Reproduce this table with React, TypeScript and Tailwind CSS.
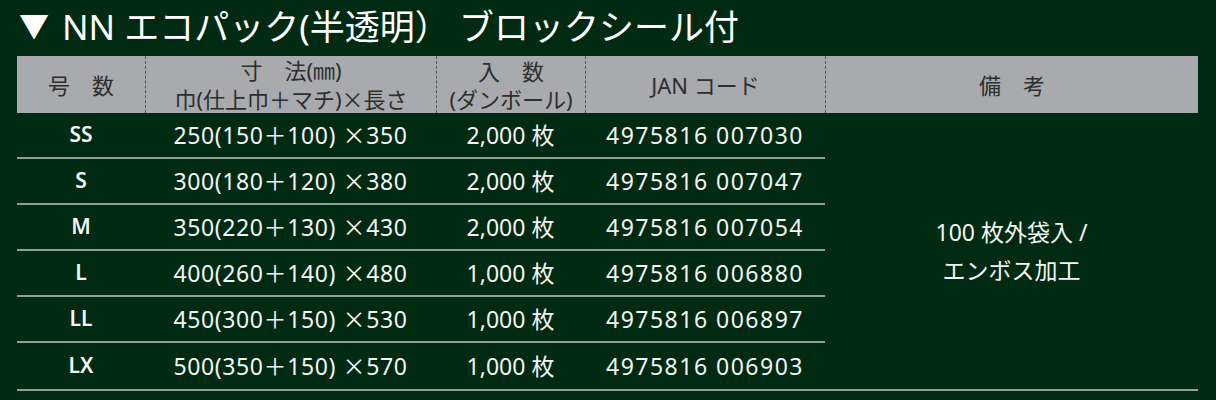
import React from "react";

const rows = [
  { size: "SS", w: "250", a: "150", b: "100", l: "350", qty: "2,000 枚", jan: "4975816 007030" },
  { size: "S", w: "300", a: "180", b: "120", l: "380", qty: "2,000 枚", jan: "4975816 007047" },
  { size: "M", w: "350", a: "220", b: "130", l: "430", qty: "2,000 枚", jan: "4975816 007054" },
  { size: "L", w: "400", a: "260", b: "140", l: "480", qty: "1,000 枚", jan: "4975816 006880" },
  { size: "LL", w: "450", a: "300", b: "150", l: "530", qty: "1,000 枚", jan: "4975816 006897" },
  { size: "LX", w: "500", a: "350", b: "150", l: "570", qty: "1,000 枚", jan: "4975816 006903" },
];

const font = "font-['Noto_Sans','Noto_Sans_CJK_JP',sans-serif]";
const cjk = "font-['Noto_Sans_CJK_JP',sans-serif]";

export default function App() {
  return (
    <main className={`w-[1216px] h-[400px] overflow-hidden bg-[#012a12] ${font}`}>
      {/* title */}
      <h1 className="h-[56px] pl-[19px] pb-[4px] flex items-center text-[35px] leading-none text-white font-normal">
        <span className="text-[30px] mr-[13px]">▼</span>
        NN エコパック(半透明） ブロックシール付
      </h1>

      <div className="ml-[17px] w-[1181px]">
        {/* header */}
        <div className="flex h-[57px] bg-[#a9aaad] text-[#2e2e2e] text-[22px] leading-[28px] text-center">
          <div className="w-[128px] flex items-center justify-center">号　数</div>
          <div className="w-[291px] flex flex-col items-center justify-center border-l border-dashed border-[#555]">
            <span>寸　法(㎜)</span>
            <span>
              巾(仕上巾＋マチ)<span className={cjk}>×</span>長さ
            </span>
          </div>
          <div className="w-[149px] flex flex-col items-center justify-center border-l border-dashed border-[#555]">
            <span>入　数</span>
            <span>(ダンボール)</span>
          </div>
          <div className="w-[240px] flex items-center justify-center border-l border-dashed border-[#555]">JAN コード</div>
          <div className="w-[373px] flex items-center justify-center border-l border-dashed border-[#555]">備　考</div>
        </div>

        {/* body */}
        <div className="flex">
          <div className="w-[808px]">
            {rows.map((r, i) => (
              <div
                key={r.size}
                className={`flex h-[46px] items-center text-[#f4f4f4] text-[23px] text-center ${i < rows.length - 1 ? "border-b-2 border-[#8da38f]" : ""}`}
              >
                <div className="w-[128px] font-semibold text-[21px]">{r.size}</div>
                <div className="w-[291px] tracking-[0.6px]">
                  {r.w}({r.a}<span className={cjk}>＋</span>{r.b}) <span className={cjk}>×</span>{r.l}
                </div>
                <div className="w-[149px]">{r.qty}</div>
                <div className="w-[240px] tracking-[1.5px]">{r.jan}</div>
              </div>
            ))}
          </div>
          <div className="w-[373px] flex flex-col items-center justify-center text-[#f4f4f4] text-[23px] leading-[38px]">
            <span>100 枚外袋入 /</span>
            <span>エンボス加工</span>
          </div>
        </div>
        <div className="h-[2px] bg-[#8da38f]" />
      </div>
    </main>
  );
}
